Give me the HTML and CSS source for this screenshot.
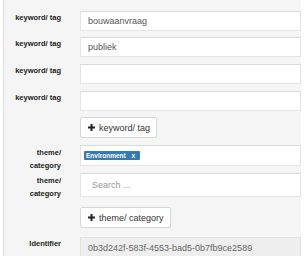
FILE: index.html
```html
<!DOCTYPE html>
<html lang="nl">
<head>
    <meta charset="UTF-8">
    <meta name="viewport" content="width=device-width, initial-scale=1.0">
    <title>Metadata</title>
    <link rel="stylesheet" href="styles.css">
</head>
<body>

    <!-- metadata form -->
    <div class="panel">
        <div class="row">
            <label class="lbl">keyword/ tag</label>
            <input class="field" type="text" value="bouwaanvraag" />
        </div>
        <div class="row">
            <label class="lbl">keyword/ tag</label>
            <input class="field" type="text" value="publiek" />
        </div>
        <div class="row">
            <label class="lbl">keyword/ tag</label>
            <input class="field" type="text" />
        </div>
        <div class="row">
            <label class="lbl">keyword/ tag</label>
            <input class="field" type="text" />
        </div>
        <div class="row row-btn">
            <span></span>
            <div><button class="add-btn"><svg class="plus" width="7" height="7" viewBox="0 0 7 7"><path d="M3.5 0V7M0 3.5H7" stroke="#222" stroke-width="2"/></svg>keyword/ tag</button></div>
        </div>

        <div class="row row-theme">
            <label class="lbl">theme/<br>category</label>
            <div class="field tags">
                <span class="tag">Environment <span class="tag-x">x</span></span>
            </div>
        </div>
        <div class="row row-search">
            <label class="lbl">theme/<br>category</label>
            <input class="field search" type="text" placeholder="Search ..." />
        </div>
        <div class="row row-btn2">
            <span></span>
            <div><button class="add-btn"><svg class="plus" width="7" height="7" viewBox="0 0 7 7"><path d="M3.5 0V7M0 3.5H7" stroke="#222" stroke-width="2"/></svg>theme/ category</button></div>
        </div>

        <div class="row">
            <label class="lbl">Identifier</label>
            <input class="field readonly" type="text" value="0b3d242f-583f-4553-bad5-0b7fb9ce2589" readonly />
        </div>
    </div>

</body>
</html>
```

FILE: styles.css
```css
body {
    margin: 0;
    padding: 0;
    background: #fff;
    font-family: 'Liberation Sans', Arial, sans-serif;
    overflow: hidden;
}

.panel {
    margin-left: 3px;
    width: 297px;
    height: 256px;
    border-left: 1px solid #dcdcdc;
    background: #f5f5f5;
    padding-top: 11px;
    box-sizing: content-box;
}

.row {
    display: grid;
    grid-template-columns: 57px 221px;
    grid-template-rows: 20px;
    column-gap: 19px;
    margin-bottom: 6px;
}

.row:nth-child(2),
.row:nth-child(3) {
    margin-bottom: 7px;
}

.lbl {
    font-size: 7.5px;
    font-weight: bold;
    line-height: 13px;
    text-align: right;
    color: #222;
    padding-top: 0;
}

.field {
    box-sizing: border-box;
    width: 221px;
    height: 20px;
    margin: 0;
    padding: 0 0 0 7px;
    border: 1px solid #e4e4e4;
    border-top-color: #dadada;
    background: #fff;
    font-family: 'Liberation Sans', Arial, sans-serif;
    font-size: 9px;
    color: #555;
    outline: none;
}

.add-btn {
    display: inline-flex;
    align-items: center;
    height: 21px;
    padding: 0 6px 0 7px;
    border: 1px solid #d6d6d6;
    border-radius: 2px;
    background: #fff;
    font-family: 'Liberation Sans', Arial, sans-serif;
    font-size: 9px;
    color: #333;
}

.plus {
    margin-right: 4px;
}

.row-btn {
    grid-template-rows: 21px;
    margin-bottom: 7px;
}

.row-theme {
    grid-template-rows: 21px;
    margin-bottom: 7px;
}

.row-theme .lbl,
.row-search .lbl {
    padding-top: 1px;
    height: 100%;
    overflow: visible;
}

.tags {
    height: 21px;
    display: flex;
    align-items: center;
    padding-left: 3px;
}

.tag {
    display: inline-block;
    background: #337ab7;
    color: #fff;
    font-size: 6.5px;
    font-weight: bold;
    line-height: 9px;
    padding: 0 5px 0 2px;
    border-radius: 1px;
}

.tag-x {
    margin-left: 4px;
}

.row-search {
    grid-template-rows: 24px;
    margin-bottom: 10px;
}

.search {
    height: 24px;
    padding-left: 11px;
}

.search::placeholder {
    color: #999;
}

.row-btn2 {
    grid-template-rows: 21px;
    margin-bottom: 9px;
}

.readonly {
    height: 22px;
    background: #eee;
    border-color: #e2e2e2;
    color: #666;
}

.row:last-child {
    grid-template-rows: 22px;
}
```
